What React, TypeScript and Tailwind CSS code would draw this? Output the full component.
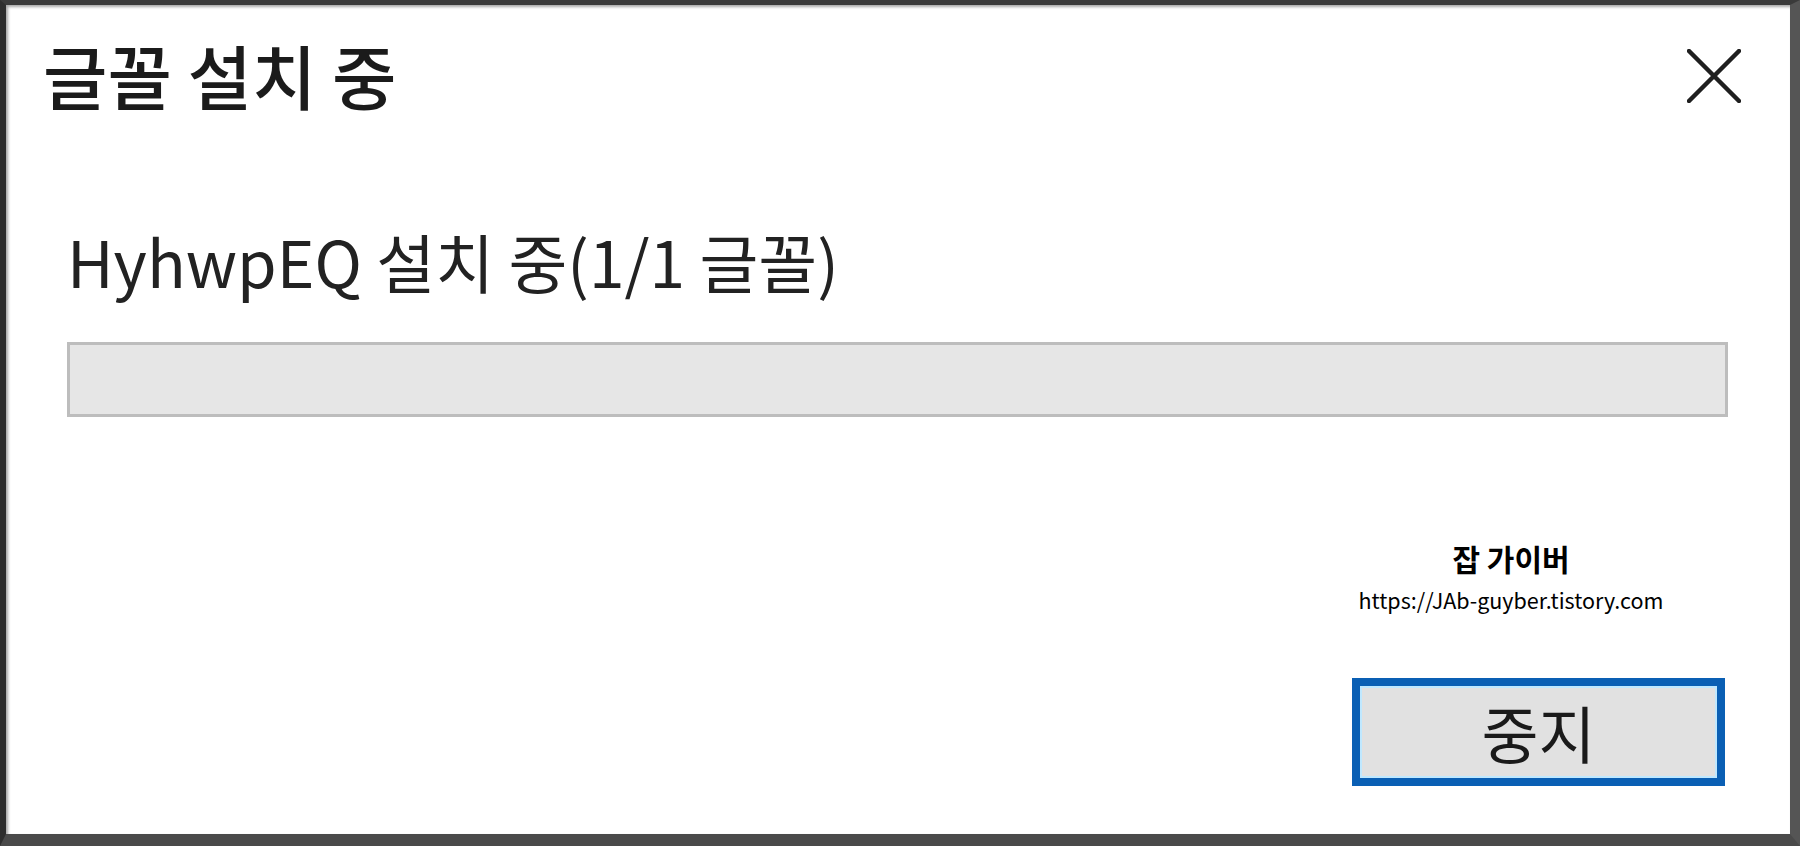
const font = { fontFamily: '"Noto Sans CJK KR", "Noto Sans", sans-serif' };

function CloseIcon() {
    return (
        <svg width="54" height="54" viewBox="0 0 54 54" className="text-[#1f1f1f]">
            <path d="M2 2 L52 52 M52 2 L2 52" stroke="currentColor" strokeWidth="4.5" strokeLinecap="round" />
        </svg>
    );
}

export default function App() {
    return (
        <div style={font} className="h-[846px] w-[1800px] overflow-hidden bg-white">
            <div className="flex h-full w-full flex-col border-t-[5px] border-l-[6px] border-r-[10px] border-b-[12px] border-t-[#3a3a3a] border-l-[#2e2e2e] border-r-[#555555] border-b-[#4a4a4a] shadow-[inset_2px_2px_3px_rgba(0,0,0,0.35)]">
                <div className="flex items-start justify-between pt-[35px] pl-[37px] pr-[49px]">
                    <h1 className="text-[70px] font-medium leading-none text-[#1b1b1b]">글꼴 설치 중</h1>
                    <button className="mt-[9px]">
                        <CloseIcon />
                    </button>
                </div>

                <div className="flex flex-col px-[61px]">
                    <p className="mt-[118px] text-[64px] leading-none text-[#222222]">
                        HyhwpEQ 설치 중(1/1 글꼴)
                    </p>
                    <div className="mt-[50px] h-[75px] w-[1661px] border-[3px] border-[#bdbdbd] bg-[#e6e6e6]" />
                </div>

                <div className="flex flex-col items-end pr-[65px]">
                    <div className="mr-[54px] mt-[126px] flex w-[320px] flex-col items-center">
                        <p className="text-[30px] font-bold leading-none text-black">잡 가이버</p>
                        <p className="mt-[16px] text-[21.5px] leading-none text-black">https://JAb-guyber.tistory.com</p>
                    </div>
                    <button className="mt-[67px] flex h-[108px] w-[373px] items-center justify-center border-[8px] border-[#0a5fb4] bg-[#e1e1e1] shadow-[inset_0_0_0_2px_#bfe8ff]">
                        <span className="text-[62px] leading-none text-[#1a1a1a]">중지</span>
                    </button>
                </div>
            </div>
        </div>
    );
}
